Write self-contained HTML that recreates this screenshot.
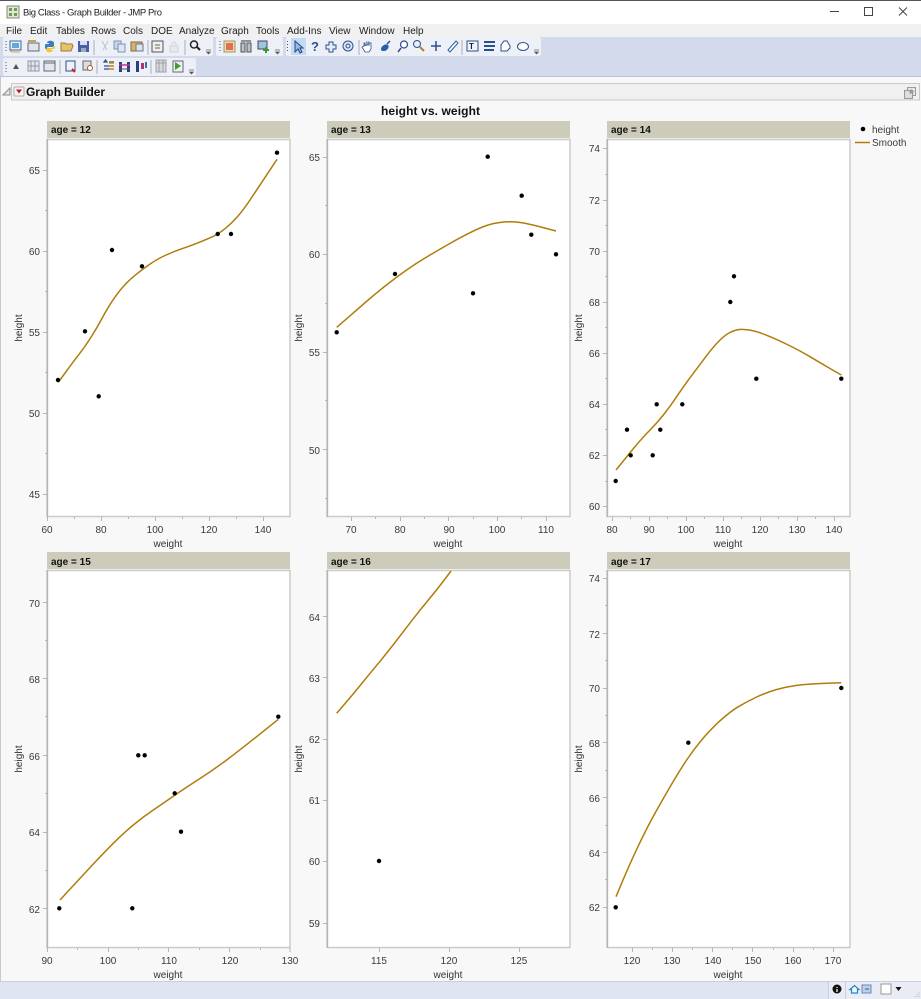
<!DOCTYPE html>
<html><head><meta charset="utf-8"><title>Big Class - Graph Builder - JMP Pro</title>
<style>
html,body{margin:0;padding:0;background:#f8f8f8;width:921px;height:999px;overflow:hidden}
svg{display:block;font-family:"Liberation Sans",sans-serif}
.m{font-size:10px;fill:#222}
.t{font-size:10px;fill:#3a3a3a}
.e{text-anchor:end}.c{text-anchor:middle}
.a{font-size:10px;fill:#333;text-anchor:middle}
.b{font-size:10px;font-weight:bold;fill:#111}
.mj{stroke:#b5b5b5;stroke-width:1;fill:none}
.fr{fill:#fff;stroke:#cacaca;stroke-width:1.5}
.l{stroke:#b4b4b4;stroke-width:1.5}
.cv{fill:none;stroke:#b07c0a;stroke-width:1.5;stroke-linejoin:round}
.hd{fill:#cdcbba}
</style></head><body>
<svg width="921" height="999" viewBox="0 0 921 999" xmlns="http://www.w3.org/2000/svg">
<rect width="921" height="999" fill="#f8f8f8"/>
<!-- title bar -->
<rect width="921" height="24" fill="#fff"/>
<rect width="921" height="1" fill="#555"/>
<g>
<rect x="7" y="6" width="12" height="12" fill="#dfe8d6" stroke="#7d8a70"/>
<path d="M9 8h3v3H9zM14 8h3v3h-3zM9 13h3v3H9zM14 13h3v3h-3z" fill="#6f9a5a"/>
</g>
<text x="23" y="15.500" style="font-size:9.5px" fill="#222" textLength="139">Big Class - Graph Builder - JMP Pro</text>
<path d="M830 11.500h9" stroke="#444" stroke-width="1"/>
<rect x="864.500" y="7.500" width="8" height="8" fill="none" stroke="#444"/>
<path d="M899 7.500l8 8M907 7.500l-8 8" stroke="#444"/>
<!-- menu -->
<rect y="24" width="921" height="13" fill="#f0f0f0"/>
<text class="m" y="34" x="6">File</text><text class="m" y="34" x="30">Edit</text><text class="m" y="34" x="56">Tables</text><text class="m" y="34" x="91">Rows</text><text class="m" y="34" x="123">Cols</text><text class="m" y="34" x="151">DOE</text><text class="m" y="34" x="179">Analyze</text><text class="m" y="34" x="221">Graph</text><text class="m" y="34" x="256">Tools</text><text class="m" y="34" x="287">Add-Ins</text><text class="m" y="34" x="329">View</text><text class="m" y="34" x="359">Window</text><text class="m" y="34" x="403">Help</text>
<!-- toolbars -->
<rect y="37" width="921" height="39" fill="#d3daec"/>
<rect y="76" width="921" height="1" fill="#b9c3da"/>
<rect x="3" y="37" width="210" height="19" rx="2" fill="#eef0f8"/>
<rect x="216" y="37" width="67" height="19" rx="2" fill="#eef0f8"/>
<rect x="286" y="37" width="255" height="19" rx="2" fill="#eef0f8"/>
<rect x="3" y="58" width="193" height="18" rx="2" fill="#eef0f8"/>
<rect x="291" y="38" width="15" height="17" fill="#c4daf4"/>
<path d="M6 41v1M6 44v1M6 47v1M6 50v1M220 41v1M220 44v1M220 47v1M220 50v1M287.500 41v1M287.500 44v1M287.500 47v1M287.500 50v1M6 62v1M6 65v1M6 68v1M6 71v1" stroke="#555"/>
<path d="M94 40v15M148 40v15M185 40v15M359 40v15M462 40v15M60 60v14M97 60v14M151 60v14" stroke="#a8aeb8"/>
<!-- row1 icons -->
<g stroke-width="1">
<rect x="10" y="41" width="11" height="9" fill="#e9eef5" stroke="#2f6ea8"/><rect x="12" y="43" width="7" height="5" fill="#6aa5d8"/><path d="M10 51l3 1h7" stroke="#e0a030" fill="none"/>
<rect x="28" y="43" width="11" height="8" fill="#dfe3ea" stroke="#667"/><path d="M28 41h8" stroke="#c9a050" stroke-width="2"/>
<path d="M45 46c0-1 0-2 1-2h3v-1h-2c0-3 7-3 7 0v3c0 1-1 1-2 1h-4c-1 0-1 1-1 2h-1c-1 0-1-2-1-3z" fill="#3f7db5"/><path d="M55 46c0 1 0 3-1 3h-3v1h2c0 3-7 3-7 0 0-1 1-2 2-2h4c1 0 1-1 1-2h1c1 0 1 0 1 0z" fill="#f2c63a"/>
<path d="M61 51v-8h4l1 1h6l1 2-2 5z" fill="#e8c26a" stroke="#a07c30"/>
<rect x="78" y="41" width="11" height="11" fill="#4a5fa8"/><rect x="80" y="41" width="7" height="4" fill="#dde"/><rect x="81" y="48" width="5" height="4" fill="#9ab"/>
<path d="M102 41l5 9M108 41l-5 9" stroke="#c0c4cc" fill="none"/>
<rect x="114" y="41" width="7" height="8" fill="#c8d6ea" stroke="#7d93b5"/><rect x="118" y="44" width="7" height="8" fill="#dce6f3" stroke="#7d93b5"/>
<rect x="131" y="42" width="11" height="9" fill="#d8b468" stroke="#846a36"/><rect x="136" y="44" width="7" height="7" fill="#dfe5ef" stroke="#6a7488"/>
<rect x="152" y="41" width="11" height="11" fill="#eee" stroke="#555"/><path d="M155 45h5M155 48h5" stroke="#666"/>
<rect x="170" y="46" width="8" height="6" fill="#e8e9ef" stroke="#cfd2d9"/><path d="M172 46v-2a2 2 0 014 0v2" fill="none" stroke="#cfd2d9"/>
<circle cx="194" cy="44.500" r="3.500" fill="none" stroke="#222" stroke-width="1.500"/><path d="M197 47l3 3" stroke="#222" stroke-width="2"/>
<path d="M206 50h5M206.500 52h4l-2 2z" fill="#444" stroke="#666" stroke-width=".7"/>
<rect x="224" y="41" width="11" height="11" fill="#f3d9a8" stroke="#996"/><rect x="226" y="43" width="7" height="7" fill="#e0705a"/>
<rect x="241" y="43" width="4" height="9" fill="#b8c2cc" stroke="#555"/><rect x="247" y="43" width="4" height="9" fill="#b8c2cc" stroke="#555"/><path d="M241 41h10" stroke="#333"/>
<rect x="258" y="41" width="9" height="8" fill="#9fc4e0" stroke="#446"/><path d="M266 47v6M263 50h6" stroke="#3a9a30" stroke-width="2"/>
<path d="M275 50h5M275.500 52h4l-2 2z" fill="#444" stroke="#666" stroke-width=".7"/>
<path d="M295 41v11l3-3 2 4 2-1-2-4h3z" fill="#9bbbe0" stroke="#234a84"/>
<text x="311" y="51" style="font-size:13px;font-weight:bold" fill="#2a4f8f">?</text>
<path d="M329 42h4v3h3v4h-3v3h-4v-3h-3v-4h3z" fill="#e8eef8" stroke="#2a4f8f"/>
<circle cx="348" cy="46" r="5" fill="#dfe8f5" stroke="#2a4f8f"/><circle cx="348" cy="46" r="2" fill="none" stroke="#2a4f8f"/>
<path d="M364 46v-3h1v3m1-4h1v4m1-4h1v4m1-3h1v6l-2 3h-4l-3-5z" fill="#fff" stroke="#2a4f8f" stroke-width=".8"/>
<path d="M381 49c0-3 5-6 7-4s-1 6-4 6-3-1-3-2z" fill="#2a5fa8"/><path d="M387 44l3-3" stroke="#2a4f8f" stroke-width="1.500"/>
<circle cx="404" cy="44.500" r="3.500" fill="#fff" stroke="#2a4f8f" stroke-width="1.200"/><path d="M401 48l-3 4" stroke="#2a4f8f" stroke-width="1.500"/>
<circle cx="417" cy="44" r="3.500" fill="#e8eef8" stroke="#2a4f8f"/><path d="M420 47l4 4" stroke="#b08030" stroke-width="2"/>
<path d="M431 46h10M436 41v10" stroke="#2a4f8f" stroke-width="1.500"/>
<path d="M448 51l8-9 2 2-8 9z" fill="#fff" stroke="#2a5f9f" transform="translate(0 -1)"/>
<rect x="467" y="41" width="11" height="10" fill="#eef3fa" stroke="#2a4f8f"/><text x="469" y="49" style="font-size:8px;font-weight:bold" fill="#123">T</text>
<path d="M484 42h11M484 46h11M484 50h10" stroke="#2a4f8f" stroke-width="2"/>
<path d="M501 51v-6l3-4h3l3 5v2l-3 3z" fill="#fff" stroke="#2a4f8f"/>
<ellipse cx="523" cy="46.500" rx="5.500" ry="4" fill="#fff" stroke="#2a4f8f"/>
<path d="M534 50h5M534.500 52h4l-2 2z" fill="#444" stroke="#666" stroke-width=".7"/>
<!-- row2 icons -->
<path d="M13 69l3-5 3 5z" fill="#555"/>
<rect x="28" y="61" width="11" height="10" fill="#e3e6ec" stroke="#9099a8"/><path d="M31 61v10M35 61v10M28 66h11" stroke="#9099a8"/>
<rect x="44" y="61" width="11" height="10" fill="#e3e6ec" stroke="#667"/><path d="M44 63h11" stroke="#667"/>
<rect x="66" y="61" width="9" height="10" fill="#eef2f8" stroke="#2a4f8f"/><path d="M72 69l3 3" stroke="#d02020" stroke-width="2"/>
<rect x="83" y="61" width="8" height="9" fill="#ddd" stroke="#667"/><circle cx="90" cy="68" r="2.500" fill="#fff" stroke="#a06030"/>
<path d="M104 62h3l-1.500-2zM104 66h10M104 69h10M109 62h5" stroke="#2a4f8f" stroke-width="1.200" fill="none"/><path d="M109 66h5M109 69h5M109 63h5" stroke="#d09020" stroke-width="1.500"/>
<rect x="119" y="62" width="3" height="10" fill="#2a3f7f"/><rect x="127" y="62" width="3" height="10" fill="#2a3f7f"/><path d="M119 65h11" stroke="#c03090" stroke-width="1.500"/><path d="M119 69h11" stroke="#555" stroke-width="1"/>
<rect x="136" y="61" width="3" height="11" fill="#2a3f7f"/><rect x="141" y="63" width="3" height="6" fill="#b03080"/><rect x="145" y="62" width="2" height="6" fill="#3a6fa8"/>
<rect x="156" y="60" width="10" height="12" fill="#d8d8dc" stroke="#a0a0a8"/><path d="M159 60v12M163 60v12M156 63h10" stroke="#a0a0a8"/>
<rect x="173" y="61" width="10" height="11" fill="#eef2ee" stroke="#667"/><path d="M175 62v8l6-4z" fill="#3aa030"/>
<path d="M189 70h5M189.500 72h4l-2 2z" fill="#444" stroke="#666" stroke-width=".7"/>
</g>
<!-- outline header -->
<rect x="11.500" y="83.500" width="908" height="16.500" fill="#f0f0f0" stroke="#c9c9c9"/>
<path d="M3 95l7-7v7z" fill="#e4e4e4" stroke="#8b8b8b"/>
<rect x="14" y="87" width="10" height="9" rx="1" fill="#f5f5f5" stroke="#aaa"/>
<path d="M16 89.500h6l-3 4z" fill="#d01020"/>
<text x="26" y="96" style="font-size:12px;font-weight:bold" fill="#111" textLength="79">Graph Builder</text>
<rect x="907.500" y="87.500" width="8" height="8" fill="#e6e6e6" stroke="#999"/>
<rect x="904.500" y="90.500" width="8" height="8" fill="#dedede" stroke="#999"/>
<path d="M911.500 89l1 1.800 1.800.2-1.300 1.300.3 1.900-1.800-1-1.800 1 .3-1.900-1.300-1.300 1.800-.2z" fill="#999"/>
<rect x="0" y="77" width="1" height="904" fill="#c9c9c9"/>
<text x="430.500" y="115" class="c" style="font-size:12px;font-weight:bold" fill="#111" textLength="99">height vs. weight</text>
<!-- legend -->
<circle cx="863" cy="129" r="2.300" fill="#000"/><text class="t" x="872" y="133">height</text>
<path d="M855 142.500h15" stroke="#b07c0a" stroke-width="1.500"/><text class="t" x="872" y="146">Smooth</text>

<!-- PANEL 1 -->
<rect class="hd" x="47" y="121" width="243" height="17"/><text class="b" x="51" y="133">age = 12</text>
<rect class="fr" x="47.500" y="139.500" width="242.500" height="377"/><path class="l" d="M47.200 139v378"/>
<path class="mj" d="M43 170.500h4M43 251.500h4M43 332.500h4M43 413.500h4M43 494.500h4M45 210.500h2M45 291.500h2M45 372.500h2M45 453.500h2M47.500 517v4M101.500 517v4M155.500 517v4M209.500 517v4M263.500 517v4M74.500 517v2M128.500 517v2M182.500 517v2M236.500 517v2"/>
<text class="t e" x="40" y="174">65</text><text class="t e" x="40" y="255">60</text><text class="t e" x="40" y="336">55</text><text class="t e" x="40" y="417">50</text><text class="t e" x="40" y="498">45</text>
<text class="t c" x="47" y="533">60</text><text class="t c" x="101" y="533">80</text><text class="t c" x="155" y="533">100</text><text class="t c" x="209" y="533">120</text><text class="t c" x="263" y="533">140</text>
<text class="a" x="168" y="547">weight</text><text class="a" transform="translate(22 328) rotate(-90)">height</text>
<path class="cv" d="M58.300 382.300L65.800 372Q73.300 361.700 79.150 354.200Q85 346.700 90.850 337.500Q96.700 328.300 102.500 317.500Q108.300 306.700 114.150 298.350Q120 290 125 284.650Q130 279.300 135.850 274.650Q141.700 270 149.200 264.650Q156.700 259.300 165 255.500Q173.300 251.700 181.650 248.850Q190 246 198.350 242.650Q206.700 239.300 212.500 236.650Q218.300 234 225 228.650Q231.700 223.300 237.500 216.650Q243.300 210 250 200Q256.700 190 266.850 174.650L277 159.300"/>
<g fill="#000"><circle cx="58" cy="380" r="2.200"/><circle cx="85" cy="331.300" r="2.200"/><circle cx="112" cy="250" r="2.200"/><circle cx="98.700" cy="396.300" r="2.200"/><circle cx="142" cy="266.300" r="2.200"/><circle cx="217.700" cy="234" r="2.200"/><circle cx="231" cy="234" r="2.200"/><circle cx="277" cy="152.700" r="2.200"/></g>

<!-- PANEL 2 -->
<rect class="hd" x="327" y="121" width="243" height="17"/><text class="b" x="331" y="133">age = 13</text>
<rect class="fr" x="327.500" y="139.500" width="242.500" height="377"/><path class="l" d="M327.200 139v378"/>
<path class="mj" d="M323 157.500h4M323 254.500h4M323 352.500h4M323 449.500h4M325 205.500h2M325 303.500h2M325 400.500h2M325 498.500h2M351.500 517v4M400.500 517v4M448.500 517v4M497.500 517v4M546.500 517v4M375.500 517v2M424.500 517v2M473.500 517v2M521.500 517v2"/>
<text class="t e" x="320" y="161">65</text><text class="t e" x="320" y="258">60</text><text class="t e" x="320" y="356">55</text><text class="t e" x="320" y="454">50</text>
<text class="t c" x="351" y="533">70</text><text class="t c" x="400" y="533">80</text><text class="t c" x="449" y="533">90</text><text class="t c" x="497" y="533">100</text><text class="t c" x="546" y="533">110</text>
<text class="a" x="448" y="547">weight</text><text class="a" transform="translate(302 328) rotate(-90)">height</text>
<path class="cv" d="M336.700 327.300L346.700 318.650Q356.700 310 365.850 302Q375 294 385 286.150Q395 278.300 405 271.150Q415 264 425.850 257.500Q436.700 251 448.350 244.350Q460 237.700 470 232.700Q480 227.700 486.650 225.500Q493.300 223.300 501.650 222.300Q510 221.300 518.350 222.300Q526.700 223.300 541.350 227.150L556 231"/>
<g fill="#000"><circle cx="336.700" cy="332.300" r="2.200"/><circle cx="395" cy="274" r="2.200"/><circle cx="473" cy="293.300" r="2.200"/><circle cx="487.700" cy="156.700" r="2.200"/><circle cx="521.700" cy="195.700" r="2.200"/><circle cx="531.300" cy="234.700" r="2.200"/><circle cx="556" cy="254.300" r="2.200"/></g>

<!-- PANEL 3 -->
<rect class="hd" x="607" y="121" width="243" height="17"/><text class="b" x="611" y="133">age = 14</text>
<rect class="fr" x="607.500" y="139.500" width="242.500" height="377"/><path class="l" d="M607.200 139v378"/>
<path class="mj" d="M603 148.500h4M603 200.500h4M603 251.500h4M603 302.500h4M603 353.500h4M603 404.500h4M603 455.500h4M603 506.500h4M605 174.500h2M605 225.500h2M605 276.500h2M605 327.500h2M605 378.500h2M605 429.500h2M605 481.500h2M612.500 517v4M649.500 517v4M686.500 517v4M723.500 517v4M760.500 517v4M797.500 517v4M834.500 517v4M630.500 517v2M667.500 517v2M704.500 517v2M741.500 517v2M778.500 517v2M815.500 517v2"/>
<text class="t e" x="600" y="152">74</text><text class="t e" x="600" y="204">72</text><text class="t e" x="600" y="255">70</text><text class="t e" x="600" y="306">68</text><text class="t e" x="600" y="357">66</text><text class="t e" x="600" y="408">64</text><text class="t e" x="600" y="459">62</text><text class="t e" x="600" y="510">60</text>
<text class="t c" x="612" y="533">80</text><text class="t c" x="649" y="533">90</text><text class="t c" x="686" y="533">100</text><text class="t c" x="723" y="533">110</text><text class="t c" x="760" y="533">120</text><text class="t c" x="797" y="533">130</text><text class="t c" x="834" y="533">140</text>
<text class="a" x="728" y="547">weight</text><text class="a" transform="translate(582 328) rotate(-90)">height</text>
<path class="cv" d="M616 470L623 461.350Q630 452.700 636.650 444.700Q643.300 436.700 650 430Q656.700 423.300 663.350 415Q670 406.700 676.650 396.700Q683.300 386.700 690.800 376.700Q698.300 366.700 705.800 356.700Q713.300 346.700 719.150 340.850Q725 335 730 332.500Q735 330 739.150 329.500Q743.300 329 750 330.150Q756.700 331.300 766.700 335.300Q776.700 339.300 788.350 345Q800 350.700 810 356.700Q820 362.700 830.650 368.850L841.300 375"/>
<g fill="#000"><circle cx="615.700" cy="481" r="2.200"/><circle cx="627" cy="429.700" r="2.200"/><circle cx="630.700" cy="455.300" r="2.200"/><circle cx="652.700" cy="455.300" r="2.200"/><circle cx="656.700" cy="404.300" r="2.200"/><circle cx="660.300" cy="429.700" r="2.200"/><circle cx="682.300" cy="404.300" r="2.200"/><circle cx="730.300" cy="302" r="2.200"/><circle cx="734" cy="276.300" r="2.200"/><circle cx="756.300" cy="378.700" r="2.200"/><circle cx="841.300" cy="378.700" r="2.200"/></g>

<!-- PANEL 4 -->
<rect class="hd" x="47" y="552" width="243" height="17"/><text class="b" x="51" y="565">age = 15</text>
<rect class="fr" x="47.500" y="570.500" width="242.500" height="377"/><path class="l" d="M47.200 570v378"/>
<path class="mj" d="M43 602.500h4M43 678.500h4M43 755.500h4M43 832.500h4M43 908.500h4M45 640.500h2M45 716.500h2M45 793.500h2M45 870.500h2M47.500 948v4M108.500 948v4M168.500 948v4M229.500 948v4M290 948v4M77.500 948v2M138.500 948v2M199.500 948v2M260.500 948v2"/>
<text class="t e" x="40" y="607">70</text><text class="t e" x="40" y="683">68</text><text class="t e" x="40" y="760">66</text><text class="t e" x="40" y="836">64</text><text class="t e" x="40" y="913">62</text>
<text class="t c" x="47" y="964">90</text><text class="t c" x="108" y="964">100</text><text class="t c" x="169" y="964">110</text><text class="t c" x="230" y="964">120</text><text class="t c" x="290" y="964">130</text>
<text class="a" x="168" y="978">weight</text><text class="a" transform="translate(22 759) rotate(-90)">height</text>
<path class="cv" d="M60 900L70 889.150Q80 878.300 91.650 865.800Q103.300 853.300 113.300 843.300Q123.300 833.300 133.300 825Q143.300 816.700 153.300 810Q163.300 803.300 173.300 796.300Q183.300 789.300 198.300 779.650Q213.300 770 226.650 760Q240 750 259.150 734.650L278.300 719.300"/>
<g fill="#000"><circle cx="59.300" cy="908.300" r="2.200"/><circle cx="132.300" cy="908.300" r="2.200"/><circle cx="138.300" cy="755.300" r="2.200"/><circle cx="144.700" cy="755.300" r="2.200"/><circle cx="174.700" cy="793.300" r="2.200"/><circle cx="181" cy="831.700" r="2.200"/><circle cx="278.300" cy="716.700" r="2.200"/></g>

<!-- PANEL 5 -->
<rect class="hd" x="327" y="552" width="243" height="17"/><text class="b" x="331" y="565">age = 16</text>
<rect class="fr" x="327.500" y="570.500" width="242.500" height="377"/><path class="l" d="M327.200 570v378"/>
<path class="mj" d="M323 616.500h4M323 677.500h4M323 739.500h4M323 800.500h4M323 861.500h4M323 923.500h4M379.500 948v4M449.500 948v4M519.500 948v4"/>
<text class="t e" x="320" y="621">64</text><text class="t e" x="320" y="682">63</text><text class="t e" x="320" y="743">62</text><text class="t e" x="320" y="804">61</text><text class="t e" x="320" y="865">60</text><text class="t e" x="320" y="927">59</text>
<text class="t c" x="379" y="964">115</text><text class="t c" x="449" y="964">120</text><text class="t c" x="519" y="964">125</text>
<text class="a" x="448" y="978">weight</text><text class="a" transform="translate(302 759) rotate(-90)">height</text>
<path class="cv" d="M336.700 713.300L345 703.650Q353.300 694 361.650 683.650Q370 673.300 378.350 663.300Q386.700 653.300 395 642.500Q403.300 631.700 411.650 620.850Q420 610 428.350 600Q436.700 590 443.850 580.500L451 571"/>
<circle cx="379" cy="861" r="2.200" fill="#000"/>

<!-- PANEL 6 -->
<rect class="hd" x="607" y="552" width="243" height="17"/><text class="b" x="611" y="565">age = 17</text>
<rect class="fr" x="607.500" y="570.500" width="242.500" height="377"/><path class="l" d="M607.200 570v378"/>
<path class="mj" d="M603 578.500h4M603 633.500h4M603 688.500h4M603 742.500h4M603 797.500h4M603 852.500h4M603 907.500h4M605 605.500h2M605 660.500h2M605 715.500h2M605 770.500h2M605 825.500h2M605 879.500h2M632.500 948v4M672.500 948v4M712.500 948v4M752.500 948v4M793.500 948v4M833.500 948v4M652.500 948v2M692.500 948v2M732.500 948v2M773.500 948v2M813.500 948v2"/>
<text class="t e" x="600" y="582">74</text><text class="t e" x="600" y="638">72</text><text class="t e" x="600" y="692">70</text><text class="t e" x="600" y="747">68</text><text class="t e" x="600" y="802">66</text><text class="t e" x="600" y="857">64</text><text class="t e" x="600" y="911">62</text>
<text class="t c" x="632" y="964">120</text><text class="t c" x="672" y="964">130</text><text class="t c" x="713" y="964">140</text><text class="t c" x="753" y="964">150</text><text class="t c" x="793" y="964">160</text><text class="t c" x="833" y="964">170</text>
<text class="a" x="728" y="978">weight</text><text class="a" transform="translate(582 759) rotate(-90)">height</text>
<path class="cv" d="M616 896.700L623 880Q630 863.300 638.350 845.800Q646.700 828.300 655 813.300Q663.300 798.300 671.650 784.150Q680 770 686.650 760Q693.300 750 701.650 740Q710 730 720 720.850Q730 711.700 738.350 706.700Q746.700 701.700 756.700 697Q766.700 692.300 776.700 689.500Q786.700 686.700 796.700 685.350Q806.700 684 824 683.350L841.300 682.700"/>
<g fill="#000"><circle cx="615.700" cy="907.300" r="2.200"/><circle cx="688.300" cy="742.700" r="2.200"/><circle cx="841.300" cy="688" r="2.200"/></g>

<!-- status bar -->
<rect y="981" width="921" height="18" fill="#dfe5f2"/>
<rect y="981" width="921" height="1" fill="#c8cfde"/>
<rect x="828" y="982" width="93" height="17" fill="#e9ecf4"/>
<path d="M828.500 982v17M845.500 982v17" stroke="#c8cfde"/>
<circle cx="837" cy="989" r="4.500" fill="#111"/><path d="M837 987v1M837 989v3" stroke="#fff" stroke-width="1.300"/>
<path d="M850 989.500l4.500-4 4.500 4h-1.500v3.500h-6v-3.500z" fill="#eef6ff" stroke="#1f86c8" stroke-width="1.200"/>
<rect x="862" y="985" width="9" height="8" fill="#bcd0ea" stroke="#6b88b0"/><path d="M865 989h4" stroke="#1f5f9f"/>
<rect x="881" y="984" width="10" height="10" fill="#fff" stroke="#999"/>
<path d="M895.500 987h6l-3 4z" fill="#111"/>
<path d="M919 992v1M917 994v1M919 994v1M915 996v1M917 996v1M919 996v1" stroke="#b5bcc9"/>
</svg>
</body></html>
